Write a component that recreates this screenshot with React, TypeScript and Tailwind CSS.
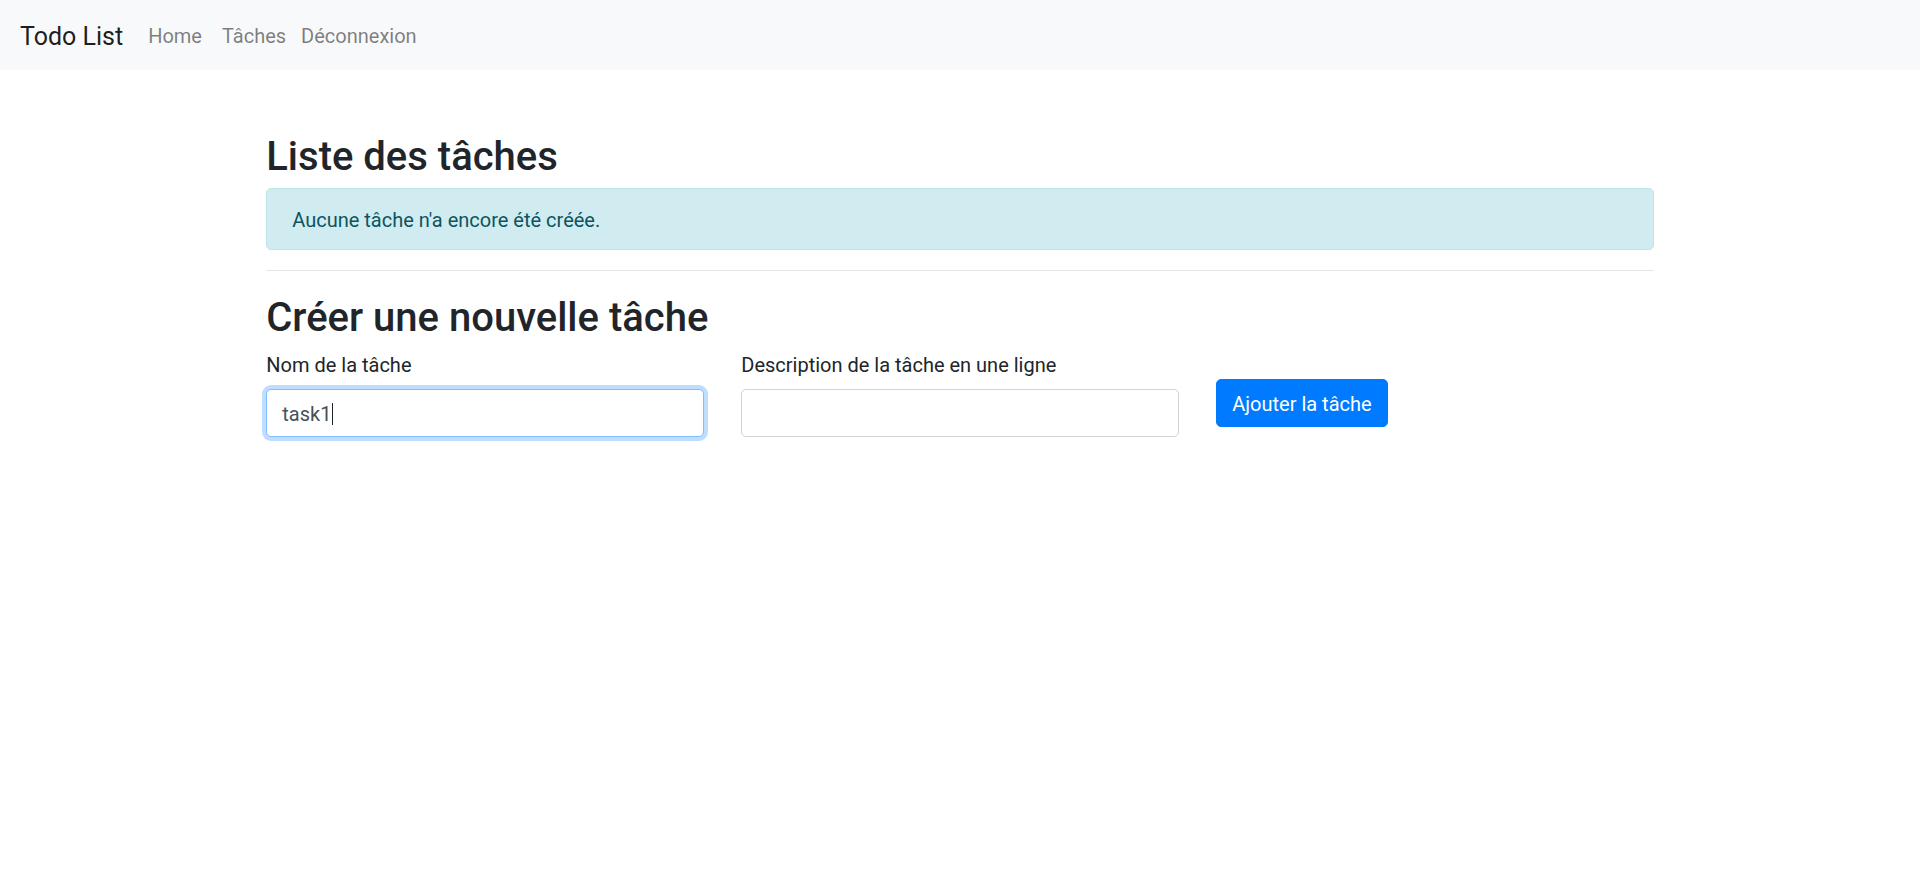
export default function App() {
  return (
    <div className="min-h-screen bg-white text-[#212529] text-[20px] leading-[30px] font-['Roboto','Liberation_Sans',sans-serif]">
      <nav className="flex items-center h-[70px] px-[20px] py-[10px] bg-[#f8f9fa]">
        <a href="#" className="text-[25px] leading-[37.5px] pt-[7.5px] pb-[5px] mr-[15px] text-black/90">
          Todo List
        </a>
        <ul className="flex">
          <li>
            <a href="#" className="block px-[10px] pt-[11px] pb-[9px] leading-[30px] text-black/50">
              Home
            </a>
          </li>
          <li>
            <a href="#" className="block pl-[10px] pr-[5px] pt-[11px] pb-[9px] leading-[30px] text-black/50">
              Tâches
            </a>
          </li>
          <li>
            <a href="#" className="block px-[10px] pt-[11px] pb-[9px] leading-[30px] text-black/50">
              Déconnexion
            </a>
          </li>
        </ul>
      </nav>

      <main className="mx-auto w-[1425px] px-[18.75px] mt-[60px]">
        <h2 className="text-[40px] leading-[48px] font-medium pt-[3px] mb-[7px]">Liste des tâches</h2>
        <div className="rounded-[5px] border-[1.25px] border-[#bee5eb] bg-[#d1ecf1] text-[#0c5460] px-[25px] pt-[16px] pb-[14px] leading-[30px]">
          Aucune tâche n'a encore été créée.
        </div>
        <hr className="my-[20px] h-0 border-0 border-t-[1.25px] border-black/10" />
        <h2 className="text-[40px] leading-[48px] font-medium pt-[3px] mb-[7px]">Créer une nouvelle tâche</h2>

        <div className="flex -mx-[18.75px]">
          <div className="w-[475px] px-[18.75px]">
            <label className="block pt-[1px] mb-[9px] leading-[30px]">Nom de la tâche</label>
            <div className="flex items-center h-[47.5px] px-[15px] pt-[2px] border-[1.25px] border-[#80bdff] rounded-[5px] shadow-[0_0_0_4px_rgba(0,123,255,0.25)] text-[#495057] bg-white">
              <span>task1</span>
              <span className="inline-block w-px h-[22px] bg-[#212529] ml-px" />
            </div>
          </div>
          <div className="w-[475px] px-[18.75px]">
            <label className="block pt-[1px] mb-[9px] leading-[30px]">Description de la tâche en une ligne</label>
            <div className="h-[47.5px] border-[1.25px] border-[#ced4da] rounded-[5px] bg-white" />
          </div>
          <div className="w-[475px] px-[18.75px]">
            <button
              type="button"
              className="mt-[30px] h-[47.5px] px-[15px] pt-[2px] border-[1.25px] border-[#007bff] bg-[#007bff] text-white rounded-[5px] leading-[30px]"
            >
              Ajouter la tâche
            </button>
          </div>
        </div>
      </main>
    </div>
  );
}
